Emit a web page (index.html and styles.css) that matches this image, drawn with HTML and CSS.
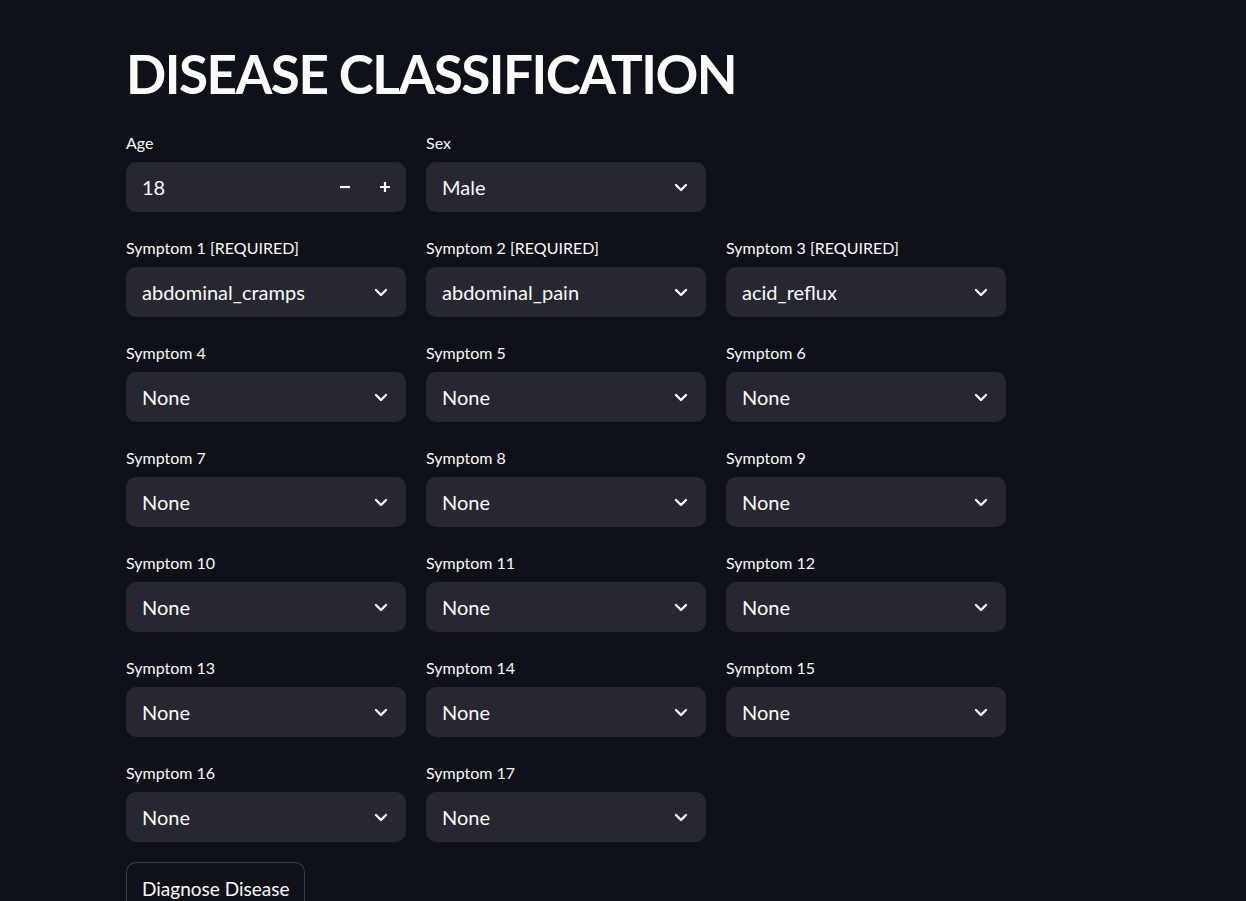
FILE: index.html
```html
<!DOCTYPE html>
<html lang="en">
<head>
<meta charset="utf-8">
<title>Disease Classification</title>
<link rel="stylesheet" href="styles.css">
</head>
<body>
<main class="container">
  <h1 class="title">DISEASE CLASSIFICATION</h1>

  <div class="grid">
    <div class="field">
      <label class="label">Age</label>
      <div class="box number">
        <span class="value">18</span>
        <span class="steps">
          <span class="step"><svg width="12" height="12" viewBox="0 0 12 12"><path d="M1 6h10" stroke="#fafafa" stroke-width="2.2"/></svg></span>
          <span class="step"><svg width="12" height="12" viewBox="0 0 12 12"><path d="M1 6h10M6 1v10" stroke="#fafafa" stroke-width="2.2"/></svg></span>
        </span>
      </div>
    </div>
    <div class="field">
      <label class="label">Sex</label>
      <div class="box select"><span class="value">Male</span><svg class="chev" width="14" height="10" viewBox="0 0 14 10"><path d="M2 3l5 5 5-5" fill="none" stroke="#fafafa" stroke-width="2.4" stroke-linecap="round" stroke-linejoin="round"/></svg></div>
    </div>
    <div class="field empty"></div>
  </div>

  <div class="grid" id="symptoms"></div>

  <button class="btn">Diagnose Disease</button>
</main>
<script src="app.js"></script>
</body>
</html>
```

FILE: app.js
```js
const vals = ["abdominal_cramps", "abdominal_pain", "acid_reflux"];
const grid = document.getElementById("symptoms");
const chev = '<svg class="chev" width="14" height="10" viewBox="0 0 14 10"><path d="M2 3l5 5 5-5" fill="none" stroke="#fafafa" stroke-width="2.4" stroke-linecap="round" stroke-linejoin="round"/></svg>';
for (let i = 1; i <= 17; i++) {
  const label = i <= 3 ? `Symptom ${i} [REQUIRED]` : `Symptom ${i}`;
  const val = i <= 3 ? vals[i - 1] : "None";
  const f = document.createElement("div");
  f.className = "field";
  f.innerHTML = `<label class="label">${label}</label><div class="box select"><span class="value">${val}</span>${chev}</div>`;
  grid.appendChild(f);
}
```

FILE: styles.css
```css
html, body {
  margin: 0;
  padding: 0;
  background: #0e1117;
  color: #fafafa;
  font-family: "Lato", "Noto Sans", sans-serif;
}
.container {
  padding: 16px 0 0 126px;
  display: flex;
  flex-direction: column;
  align-items: flex-start;
  gap: 20px;
}
.title {
  margin: 0;
  padding: 25px 0 0 0;
  font-size: 53px;
  font-weight: 700;
  line-height: 66px;
  letter-spacing: -1.5px;
}
.grid {
  display: grid;
  grid-template-columns: repeat(3, 280px);
  column-gap: 20px;
  row-gap: 20px;
}
.field {
  display: flex;
  flex-direction: column;
}
.label {
  height: 30px;
  margin-bottom: 5px;
  display: flex;
  align-items: center;
  font-size: 16px;
}
.box {
  height: 50px;
  box-sizing: border-box;
  background: #262730;
  border-radius: 10px;
  display: flex;
  align-items: center;
  justify-content: space-between;
  padding: 0 18px 0 16px;
  font-size: 20px;
}
.number { padding-right: 1px; }
.steps { display: flex; }
.step {
  width: 40px;
  height: 50px;
  display: flex;
  align-items: center;
  justify-content: center;
}
.chev { display: block; }
.btn {
  margin-top: 0;
  height: 52px;
  padding: 0 15px;
  background: #0e1117;
  color: #fafafa;
  border: 1px solid rgba(250, 250, 250, 0.2);
  border-radius: 10px;
  font-family: inherit;
  font-size: 19px;
  display: flex;
  align-items: center;
}
```
